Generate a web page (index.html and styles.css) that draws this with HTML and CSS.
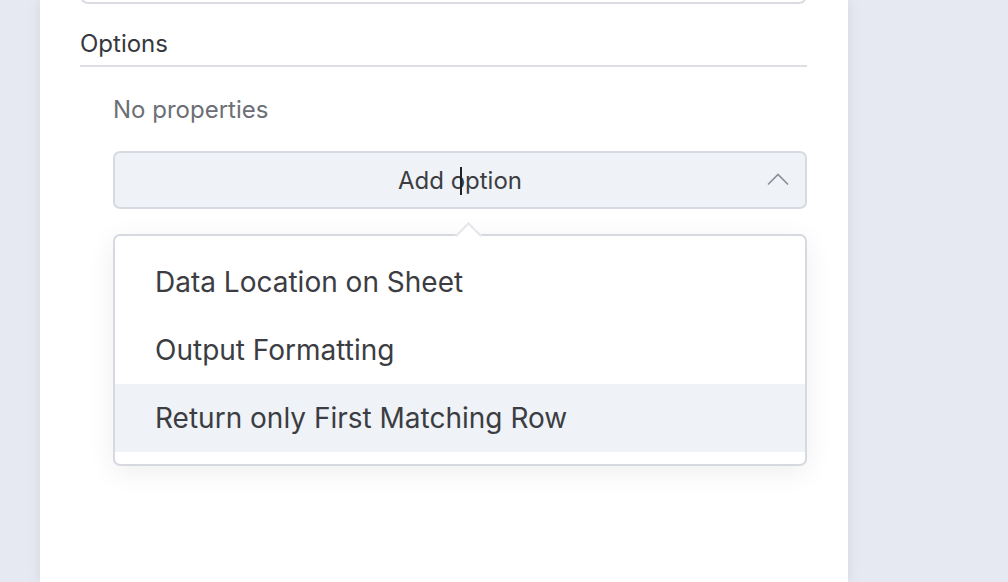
FILE: index.html
```html
<!DOCTYPE html>
<html lang="en">
<head>
  <meta charset="UTF-8" />
  <title>Options</title>
  <link rel="stylesheet" href="styles.css">
</head>
<body>

  <main class="panel">
    <!-- bottom of the field above -->
    <div class="field-tail"></div>

    <h2 class="section-title">Options</h2>

    <div class="section-body">
      <p class="empty">No properties</p>

      <div class="select">
        <button class="select-button" type="button">
          Add option
          <span class="text-cursor"></span>
          <svg class="chevron" width="22" height="14" viewBox="0 0 22 14">
            <path d="M1 12.5 L11 2.5 L21 12.5" fill="none" stroke="#8b8e94" stroke-width="1.6" />
          </svg>
        </button>

        <div class="menu">
          <div class="menu-item">Data Location on Sheet</div>
          <div class="menu-item">Output Formatting</div>
          <div class="menu-item active">Return only First Matching Row</div>
        </div>
      </div>
    </div>
  </main>

</body>
</html>
```

FILE: styles.css
```css
* {
  box-sizing: border-box;
}

body {
  margin: 0;
  height: 582px;
  overflow: hidden;
  background: #e7e9f2;
  font-family: Inter, "Noto Sans", sans-serif;
  color: #3b3d42;
}

.panel {
  margin-left: 40px;
  width: 808px;
  height: 582px;
  overflow: hidden;
  background: #fff;
  padding: 0 41px 0 40px;
  box-shadow: 0 0 12px rgba(60, 70, 110, 0.12);
}

.field-tail {
  height: 44px;
  margin-top: -40px;
  border: 2px solid #dadce2;
  border-radius: 8px;
}

.section-title {
  margin: 26px 0 0;
  padding-bottom: 7px;
  font-size: 24px;
  line-height: 28px;
  font-weight: 400;
  color: #36383d;
  border-bottom: 2px solid #dcdee3;
}

.section-body {
  padding-left: 33px;
}

.empty {
  margin: 29px 0 0;
  font-size: 24px;
  line-height: 28px;
  color: #6c6f75;
}

.select {
  margin-top: 27px;
}

.select-button {
  position: relative;
  display: flex;
  align-items: center;
  justify-content: center;
  width: 100%;
  height: 58px;
  background: #eff2f7;
  border: 2px solid #d6d9df;
  border-radius: 7px;
  font-family: inherit;
  font-size: 24px;
  color: #3b3d42;
  cursor: pointer;
}

.chevron {
  position: absolute;
  right: 16px;
  top: 19px;
}

/* I-beam pointer resting over the label */
.text-cursor {
  position: absolute;
  left: 345px;
  top: 14px;
  width: 2px;
  height: 28px;
  background: #222;
}

.menu {
  position: relative;
  margin-top: 25px;
  padding: 12px 0;
  background: #fff;
  border: 2px solid #d6d9df;
  border-radius: 7px;
  box-shadow: 0 6px 28px rgba(0, 0, 0, 0.07);
}

.menu::before {
  content: "";
  position: absolute;
  top: -10px;
  left: 344px;
  width: 17px;
  height: 17px;
  background: #fff;
  border-top: 2px solid #e4e6ea;
  border-left: 2px solid #e4e6ea;
  transform: rotate(45deg);
}

.menu-item {
  height: 68px;
  display: flex;
  align-items: center;
  padding-left: 40px;
  font-size: 28px;
  color: #3b3d42;
}

.menu-item.active {
  background: #eff2f7;
}
```
